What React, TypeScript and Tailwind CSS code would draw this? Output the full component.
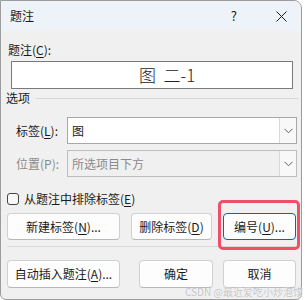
import React from "react";

const font = { fontFamily: '"Noto Sans CJK SC", "Noto Sans", sans-serif' };

function U({ children }: { children: React.ReactNode }) {
  return <span className="underline underline-offset-[2px] decoration-1">{children}</span>;
}

function Btn({
  children,
  w,
  primary,
  h = "h-[27px]",
}: {
  children: React.ReactNode;
  w: string;
  primary?: boolean;
  h?: string;
}) {
  return (
    <div
      className={`${w} ${h} flex items-center justify-center rounded-[4px] bg-[#fdfdfd] text-[12px] text-[#1a1a1a] border ${
        primary ? "border-[#0067c0]" : "border-[#d0d0d0] border-b-[#b8b8b8]"
      }`}
    >
      {children}
    </div>
  );
}

function Chevron() {
  return (
    <svg width="9" height="6" viewBox="0 0 9 6" fill="none">
      <path d="M0.5 0.8 L4.5 4.8 L8.5 0.8" stroke="#606060" strokeWidth="1" />
    </svg>
  );
}

export default function App() {
  return (
    <div className="relative w-[305px] h-[300px] bg-white overflow-hidden" style={font}>
      <div className="w-[302px] h-[300px] flex flex-col border border-[#9c9c9c] rounded-tr-[8px] rounded-b-[6px] overflow-hidden bg-[#f0f0f0]">
        {/* Title bar */}
        <div className="h-[30px] shrink-0 bg-[#eef3f9] flex items-center pl-[9px] text-[12px] text-[#1a1a1a]">
          <span>题注</span>
          <span className="ml-auto mr-[39px] text-[13px]">?</span>
          <svg width="11" height="11" viewBox="0 0 11 11" className="mr-[14px]">
            <path d="M0.5 0.5 L10.5 10.5 M10.5 0.5 L0.5 10.5" stroke="#1a1a1a" strokeWidth="1" />
          </svg>
        </div>

        {/* Body */}
        <div className="flex flex-col text-[12px] text-[#1a1a1a]">
          <div className="mt-[11px] ml-[7px] h-[16px] leading-[16px]">
            题注(<U>C</U>):
          </div>
          <div className="mt-[3px] ml-[10px] w-[282px] h-[28px] bg-white border border-[#7a7a7a] flex items-center pl-[127px] text-[17px] font-light text-[#222]">
            图&nbsp;&nbsp;二-1
          </div>

          <div className="mt-[1px] ml-[5px] h-[16px] flex items-center">
            <span className="leading-[16px]">选项</span>
            <div className="ml-[6px] w-[262px] h-px bg-[#d5d5d5]" />
          </div>

          <div className="mt-[11px] flex items-center h-[27px]">
            <div className="pl-[15px] w-[66px]">
              标签(<U>L</U>):
            </div>
            <div className="w-[230px] h-[27px] bg-white border border-[#a8a8a8] flex items-center">
              <span className="pl-[4px] flex-1">图</span>
              <div className="w-[17px] h-full border-l border-[#d8d8d8] bg-[#f8f8f8] flex items-center justify-center">
                <Chevron />
              </div>
            </div>
          </div>

          <div className="mt-[6px] flex items-center h-[27px] text-[#8a8a8a]">
            <div className="pl-[15px] w-[66px]">位置(P):</div>
            <div className="w-[230px] h-[27px] bg-[#f0f0f0] border border-[#bdbdbd] flex items-center">
              <span className="pl-[4px] flex-1">所选项目下方</span>
              <div className="w-[17px] h-full border-l border-[#d8d8d8] bg-[#f8f8f8] flex items-center justify-center">
                <Chevron />
              </div>
            </div>
          </div>

          <div className="mt-[14px] ml-[6px] flex items-center h-[16px]">
            <div className="w-[12px] h-[12px] rounded-[3px] border border-[#444] bg-[#f8f8f8]" />
            <span className="ml-[5px]">
              从题注中排除标签(<U>E</U>)
            </span>
          </div>

          <div className="mt-[6px] ml-[6px] flex items-center">
            <Btn w="w-[113px]">
              新建标签(<U>N</U>)...
            </Btn>
            <div className="w-[11px]" />
            <Btn w="w-[81px]">
              删除标签(<U>D</U>)
            </Btn>
            <div className="w-[11px]" />
            <Btn w="w-[73px]" primary>
              编号(<U>U</U>)...
            </Btn>
          </div>

          <div className="mt-[6px] ml-[6px] w-[290px] h-px bg-[#d8d8d8]" />

          <div className="mt-[13px] ml-[6px] flex items-center">
            <Btn w="w-[113px]" h="h-[28px]">
              自动插入题注(<U>A</U>)...
            </Btn>
            <div className="w-[19px]" />
            <Btn w="w-[74px]" h="h-[28px]">
              确定
            </Btn>
            <div className="w-[10px]" />
            <Btn w="w-[73px]" h="h-[28px]">
              取消
            </Btn>
          </div>
        </div>
      </div>

      {/* Red highlight */}
      <div className="absolute left-[218px] top-[200px] w-[82px] h-[50px] border-[3px] border-[#f14f68] rounded-[5px]" />

      {/* Watermark */}
      <div
        className="absolute left-[185px] top-[286px] text-[10px] leading-[12px] text-[#c4c4c4] whitespace-nowrap"
        style={{ textShadow: "0 0 1px #fff" }}
      >
        CSDN @最近爱吃小炒泡馍
      </div>
    </div>
  );
}
